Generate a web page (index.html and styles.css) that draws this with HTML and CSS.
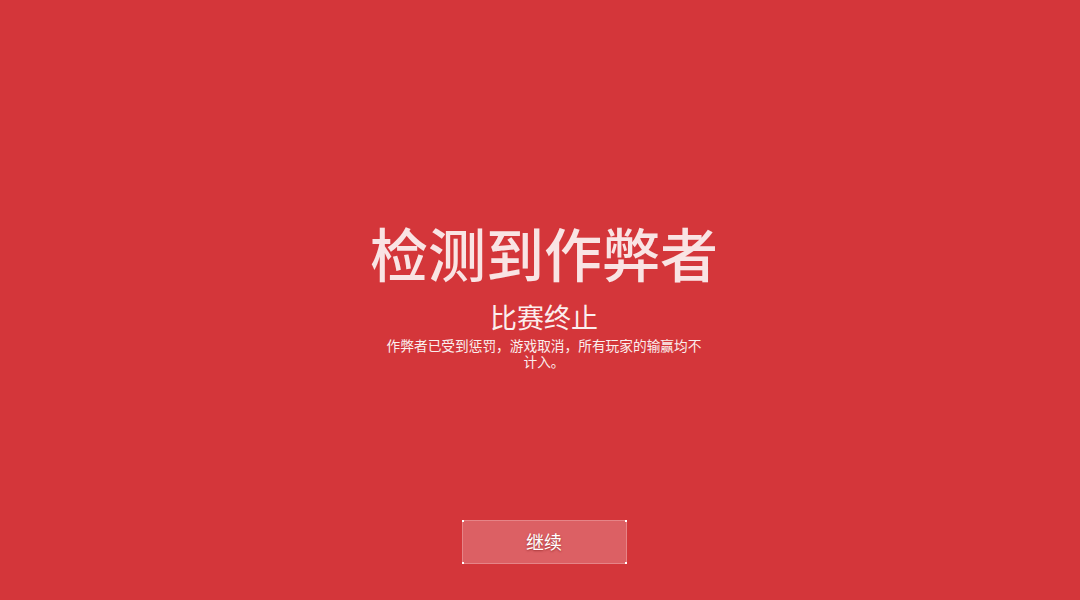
FILE: index.html
```html
<!DOCTYPE html>
<html lang="zh">
<head>
<meta charset="utf-8">
<link rel="stylesheet" href="styles.css">
</head>
<body>
<main class="screen">
  <section class="message">
    <h1 class="title">检测到作弊者</h1>
    <h2 class="subtitle">比赛终止</h2>
    <p class="desc">作弊者已受到惩罚，游戏取消，所有玩家的输赢均不计入。</p>
  </section>
  <div class="actions">
    <button class="btn">继续<span class="dot tl"></span><span class="dot tr"></span><span class="dot bl"></span><span class="dot br"></span></button>
  </div>
</main>
</body>
</html>
```
FILE: styles.css
```css
html, body { margin: 0; padding: 0; }
body {
  width: 1080px; height: 600px; overflow: hidden;
  background: #d4363a;
  font-family: "Noto Sans CJK SC", "Noto Sans", sans-serif;
}
.screen {
  height: 600px;
  box-sizing: border-box;
  padding-left: 8px;
  display: flex; flex-direction: column; align-items: center;
}
.message {
  display: flex; flex-direction: column; align-items: center;
  padding-top: 214px;
}
.title {
  margin: 0;
  font-size: 58px; font-weight: 500; line-height: 76px;
  color: #f9e4e4;
}
.subtitle {
  margin: 12px 0 0;
  font-size: 27px; font-weight: 400; line-height: 30px;
  color: #fbeeee;
}
.desc {
  margin: 5px 0 0;
  width: 322px; text-align: center;
  font-size: 13.7px; line-height: 16px;
  color: #fbeeee;
}
.actions {
  margin-top: auto; padding-bottom: 36px;
}
.btn {
  position: relative;
  width: 165px; height: 44px;
  background: #dc6064;
  border: 1px solid #e68487;
  color: #fff;
  font-family: inherit; font-size: 18px;
  text-shadow: 0 1px 2px rgba(120,20,20,0.6);
  padding: 0 0 3px; cursor: pointer;
}
.dot { position: absolute; width: 2px; height: 2px; background: #fff; }
.tl { top: -1px; left: -1px; }
.tr { top: -1px; right: -1px; }
.bl { bottom: -1px; left: -1px; }
.br { bottom: -1px; right: -1px; }
```
